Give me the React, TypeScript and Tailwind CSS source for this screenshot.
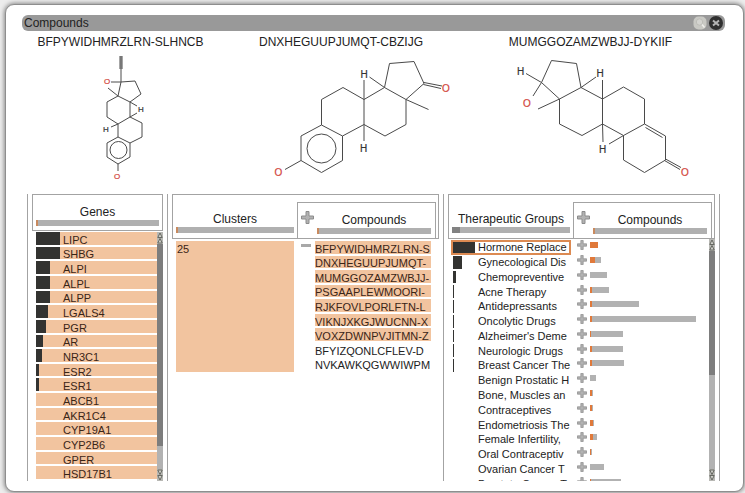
import React from "react";

type Pt = [number, number];
type Atom = { symbol: "H" | "O"; at: Pt };
type Molecule = {
  name: string;
  viewBox: string;
  fontSize: number;
  bonds: string;
  ring?: { cx: number; cy: number; r: number };
  atoms: Atom[];
};

const molecules: Molecule[] = [
  {
    name: "BFPYWIDHMRZLRN-SLHNCB",
    viewBox: "22 50 197 144",
    fontSize: 8,
    bonds:
      "M120 56V69M121 56V69M122 56V69M121 69V82M111 82H121L135 81L141 94L130 102L118 96L121 82M118 96L108 88M118 96L107 102V117L118 124L130 117V102L137 106M130 117L137 113M130 117L142 123V137L130 143L118 137V124L111 127M130 143V157L118 164L107 157V143L118 137M118 164V171",
    ring: { cx: 118.5, cy: 150, r: 8.5 },
    atoms: [
      { symbol: "O", at: [107, 81] },
      { symbol: "H", at: [141, 109.5] },
      { symbol: "H", at: [106, 129] },
      { symbol: "O", at: [117, 176.5] },
    ],
  },
  {
    name: "DNXHEGUUPJUMQT-CBZIJG",
    viewBox: "219 50 244 144",
    fontSize: 10,
    bonds:
      "M384.5 87.5L389.5 63.5L414 61.5L424 83.5L406 99.5L384.5 87.5L369.5 77M424 82.5L442 86M423.5 84.5L441 88.5M406 99.5L428.5 109.5M406 99.5V124.5L385 136L364 124.5V80M384.5 87.5L364 99.5L343 87.5L321.5 99.5V125L342.5 136L364 124.5V141M342.5 136V160.5L321.5 172.5L301 160.5V136L321.5 125M301 160.5L285 169.5",
    ring: { cx: 321.5, cy: 148.5, r: 14.5 },
    atoms: [
      { symbol: "H", at: [364, 74] },
      { symbol: "O", at: [446, 88.5] },
      { symbol: "H", at: [363.5, 148.5] },
      { symbol: "O", at: [278.5, 172.5] },
    ],
  },
  {
    name: "MUMGGOZAMZWBJJ-DYKIIF",
    viewBox: "463 50 255 144",
    fontSize: 10,
    bonds:
      "M541.5 82.5L551.5 60.5L576.5 63.5L581 87.5L559.5 99L541.5 82.5L526 73.5M541.5 82.5L533 96M559.5 99L538 109M581 87.5L596 77M602.5 80V124L603 142M559.5 99V124L582 135.5L602.5 124M602.5 99L581 87.5M602.5 99L623.5 87L644.5 99V124L623.5 135.5L602.5 124M623.5 135.5L609 144M644.5 124L665.5 136V160L644.5 172.5L623.5 160V135.5M645.5 127.5L662.5 137.5M665.5 159L681 167.5M664.5 160.5L680 169.5",
    atoms: [
      { symbol: "H", at: [520.5, 71] },
      { symbol: "O", at: [527, 103] },
      { symbol: "H", at: [600, 73.5] },
      { symbol: "H", at: [602.5, 149] },
      { symbol: "O", at: [685, 172.5] },
    ],
  },
];

const genes = [
  { name: "LIPC", width: 24 },
  { name: "SHBG", width: 24 },
  { name: "ALPI", width: 14 },
  { name: "ALPL", width: 14 },
  { name: "ALPP", width: 14 },
  { name: "LGALS4", width: 12 },
  { name: "PGR", width: 10 },
  { name: "AR", width: 7 },
  { name: "NR3C1", width: 6 },
  { name: "ESR2", width: 3 },
  { name: "ESR1", width: 3 },
  { name: "ABCB1", width: 0 },
  { name: "AKR1C4", width: 0 },
  { name: "CYP19A1", width: 0 },
  { name: "CYP2B6", width: 0 },
  { name: "GPER", width: 0 },
  { name: "HSD17B1", width: 0 },
];

const clusterCompounds = [
  { name: "BFPYWIDHMRZLRN-S", marked: true },
  { name: "DNXHEGUUPJUMQT-", marked: true },
  { name: "MUMGGOZAMZWBJJ-", marked: true },
  { name: "PSGAAPLEWMOORI-", marked: true },
  { name: "RJKFOVLPORLFTN-L", marked: true },
  { name: "VIKNJXKGJWUCNN-X", marked: true },
  { name: "VOXZDWNPVJITMN-Z", marked: true },
  { name: "BFYIZQONLCFLEV-D", marked: false },
  { name: "NVKAWKQGWWIWPM", marked: false },
];

const groups = [
  { name: "Hormone Replace", match: 22, total: 8, hit: 8 },
  { name: "Gynecological Dis", match: 9, total: 11, hit: 5 },
  { name: "Chemopreventive", match: 3, total: 17, hit: 0 },
  { name: "Acne Therapy", match: 1, total: 19, hit: 2 },
  { name: "Antidepressants", match: 1, total: 49, hit: 2 },
  { name: "Oncolytic Drugs", match: 1, total: 106, hit: 2 },
  { name: "Alzheimer's Deme", match: 1, total: 33, hit: 1 },
  { name: "Neurologic Drugs", match: 1, total: 33, hit: 2 },
  { name: "Breast Cancer The", match: 1, total: 34, hit: 2 },
  { name: "Benign Prostatic H", match: 0, total: 6, hit: 0 },
  { name: "Bone, Muscles an", match: 0, total: 3, hit: 2 },
  { name: "Contraceptives", match: 0, total: 3, hit: 2 },
  { name: "Endometriosis The", match: 0, total: 4, hit: 3 },
  { name: "Female Infertility,", match: 0, total: 7, hit: 3 },
  { name: "Oral Contraceptiv", match: 0, total: 2, hit: 1 },
  { name: "Ovarian Cancer T", match: 0, total: 14, hit: 0 },
  { name: "Prostate Cancer T", match: 0, total: 31, hit: 1 },
];

function Structure({ molecule }: { molecule: Molecule }) {
  return (
    <svg viewBox={molecule.viewBox} className="h-36 w-full" role="img" aria-label={molecule.name}>
      <path d={molecule.bonds} fill="none" stroke="#4a4a4a" strokeWidth="1" strokeLinejoin="round" />
      {molecule.ring && <circle {...molecule.ring} fill="none" stroke="#4a4a4a" strokeWidth="1" />}
      {molecule.atoms.map((atom, i) => (
        <text
          key={i}
          x={atom.at[0]}
          y={atom.at[1] + molecule.fontSize * 0.36}
          textAnchor="middle"
          fontSize={molecule.fontSize}
          fill={atom.symbol === "O" ? "#d2463c" : "#333333"}
          stroke={atom.symbol === "O" ? "#d2463c" : "#333333"}
          strokeWidth="0.2"
        >
          {atom.symbol}
        </text>
      ))}
    </svg>
  );
}

function Plus({ className }: { className: string }) {
  return (
    <svg viewBox="0 0 13 13" className={className} aria-hidden="true">
      <path
        d="M5 .5H8V5H12.500V8H8V12.500H5V8H.5V5H5Z"
        fill="#b2b2b2"
        stroke="#8c8c8c"
        strokeWidth="1"
        strokeLinejoin="round"
      />
    </svg>
  );
}

function Expand({ label, className }: { label: string; className: string }) {
  return (
    <button type="button" aria-label={label} className="flex shrink-0 items-center">
      <Plus className={className} />
    </button>
  );
}

function Summary({ title, accent = "w-[2px] bg-[#c98a5e]" }: { title: string; accent?: string }) {
  return (
    <div className="flex min-w-0 flex-1 flex-col">
      <h2 className="text-center text-[12px] leading-4 whitespace-nowrap">{title}</h2>
      <div className="h-[6px] bg-[#b0b0b0]">
        <div className={`h-full ${accent}`} />
      </div>
    </div>
  );
}

function CompoundsHeader() {
  return (
    <div className="mr-[2px] flex h-9 w-[139px] items-end gap-[3px] self-end border border-b-0 border-[#a3a3a3] pr-1 pb-1 pl-[3px]">
      <div className="self-start pt-2">
        <Expand label="Expand all compounds" className="size-[13px]" />
      </div>
      <Summary title="Compounds" />
    </div>
  );
}

function Arrows({ flip = false }: { flip?: boolean }) {
  return (
    <svg viewBox="0 0 6 12" className={`h-3 w-full ${flip ? "rotate-180" : ""}`} aria-hidden="true">
      <rect width="6" height="12" fill="#b8b8b4" />
      <path d="M.8 5.500L3 1L5.200 5.500ZM.8 11L3 6.500L5.200 11Z" fill="#d0d0ca" stroke="#5c5f58" strokeWidth=".9" />
    </svg>
  );
}

function Scrollbar({ thumb }: { thumb: string }) {
  return (
    <div className="mr-1 flex w-[6px] shrink-0 flex-col bg-[#b2b2b2]">
      <Arrows />
      <div className={`bg-[#7d7d7d] ${thumb}`} />
      <div className="flex-1" />
      <Arrows flip />
    </div>
  );
}

export default function App() {
  return (
    <div className="flex min-h-screen bg-[#ededed] pt-1 pr-px pb-px pl-[5px] font-['Liberation_Sans',Arial,sans-serif] text-[#222222]">
      <main className="flex-1 rounded-[9px] border border-[#8e8e8e] bg-white pt-[10px] shadow-[0_0_4px_1px_#8a8a8a]">
        <header className="mr-[18px] ml-4 flex h-4 items-center rounded-[6px] bg-[#999999] pr-[2px] pl-[2px]">
          <h1 className="flex-1 text-[12px] leading-4">Compounds</h1>
          <div className="flex items-center gap-[2px]">
            <button type="button" aria-label="Search" className="block">
              <svg viewBox="0 0 14 14" className="size-[14px]">
                <rect x=".5" y=".5" width="13" height="13" rx="5" fill="#c9c9c4" />
                <circle cx="6.500" cy="6" r="3.200" fill="#d4d4d0" stroke="#bdbdb8" />
                <path d="M9 8.500L11.500 11.500" stroke="#efefec" strokeWidth="1.500" />
              </svg>
            </button>
            <button type="button" aria-label="Close" className="block">
              <svg viewBox="0 0 14 14" className="size-[14px]">
                <circle cx="7" cy="7" r="7" fill="#303030" />
                <path d="M4 4.500L10 9.500M10 4.500L4 9.500" stroke="#b5b5b5" strokeWidth="2" />
              </svg>
            </button>
          </div>
        </header>

        <section className="mr-[25px] ml-4 grid grid-cols-[197fr_244fr_255fr] pt-[3px]">
          {molecules.map((m) => (
            <figure key={m.name}>
              <figcaption className="text-center text-[12px] leading-4">{m.name}</figcaption>
              <Structure molecule={m} />
            </figure>
          ))}
        </section>

        <div className="mr-[23px] ml-[21px] grid h-[287px] grid-cols-[140fr_276fr_276fr] border-r border-[#a3a3a3]">
          <section className="flex min-h-0 flex-col border-l border-[#a3a3a3]">
            <div className="mx-1 flex h-[37px] items-end border border-[#a3a3a3] px-[3px] pb-1">
              <Summary title="Genes" />
            </div>
            <div className="flex min-h-0 flex-1 pt-px pl-2">
              <ul className="grid flex-1 auto-rows-fr">
                {genes.map((g) => (
                  <li key={g.name} className="flex min-h-0 items-center border-b-2 border-white bg-[#f2c49f]">
                    <div className="h-full w-[27px] shrink-0">
                      <div className="h-full bg-[#333331]" style={{ width: g.width }} />
                    </div>
                    <span className="pt-[3px] text-[11px] leading-3 text-[#3a2517]">{g.name}</span>
                  </li>
                ))}
              </ul>
              <Scrollbar thumb="h-[202px]" />
            </div>
          </section>

          <section className="flex min-h-0 flex-col border-l border-[#a3a3a3]">
            <div className="mx-1 flex h-[45px] border border-[#a3a3a3]">
              <div className="flex flex-1 items-end px-[3px] pb-[5px]">
                <Summary title="Clusters" />
              </div>
              <CompoundsHeader />
            </div>
            <div className="flex h-[133px] pt-[2px] pr-3 pl-2">
              <div className="flex-1 bg-[#f2c49f] pt-[2px] pl-px text-[11px] leading-3 text-[#3a2517]">25</div>
              <button type="button" aria-label="Collapse cluster" className="mr-1 ml-[7px] flex h-2 w-[10px] items-center">
                <span className="block h-[3px] w-full bg-[#a8a8a8]" />
              </button>
              <ul className="grid w-[116px] auto-rows-fr">
                {clusterCompounds.map((c) => (
                  <li
                    key={c.name}
                    className={`flex min-h-0 items-center border-b-2 border-white whitespace-nowrap ${
                      c.marked ? "bg-[#f2c49f] text-[#3a2517]" : ""
                    }`}
                  >
                    <span className="pt-[3px] text-[11px] leading-3">{c.name}</span>
                  </li>
                ))}
              </ul>
            </div>
          </section>

          <section className="flex min-h-0 flex-col border-l border-[#a3a3a3]">
            <div className="mx-1 flex h-[45px] border border-[#a3a3a3]">
              <div className="flex flex-1 items-end px-[3px] pb-[5px]">
                <Summary title="Therapeutic Groups" accent="w-2 bg-[#828282]" />
              </div>
              <CompoundsHeader />
            </div>
            <div className="flex min-h-0 flex-1 pl-[7px]">
              <div className="h-full w-[120px] shrink-0 overflow-hidden pt-px">
                <ul className="grid h-[251px] auto-rows-fr">
                  {groups.map((g, i) => (
                    <li
                      key={g.name}
                      className={`flex min-h-0 items-center py-px pl-[2px] ${
                        i === 0 ? "outline-2 -outline-offset-2 outline-[#dc8a52]" : ""
                      }`}
                    >
                      <div className="h-full w-[25px] shrink-0">
                        <div className="h-full bg-[#333331]" style={{ width: g.match }} />
                      </div>
                      <span className="text-[11px] leading-3 whitespace-nowrap">{g.name}</span>
                    </li>
                  ))}
                </ul>
              </div>
              <div className="h-full flex-1 overflow-hidden pl-[6px]">
                <ul className="-mt-px grid h-[251px] auto-rows-fr">
                  {groups.map((g) => (
                    <li key={g.name} className="flex min-h-0 items-center gap-[3px]">
                      <Expand label={`Expand ${g.name}`} className="size-[10px]" />
                      <div className="h-[6px] bg-[#b2b2b2]" style={{ width: g.total }}>
                        <div className="h-full bg-[#e0793a]" style={{ width: g.hit }} />
                      </div>
                    </li>
                  ))}
                </ul>
              </div>
              <Scrollbar thumb="h-[124px]" />
            </div>
          </section>
        </div>
      </main>
    </div>
  );
}
